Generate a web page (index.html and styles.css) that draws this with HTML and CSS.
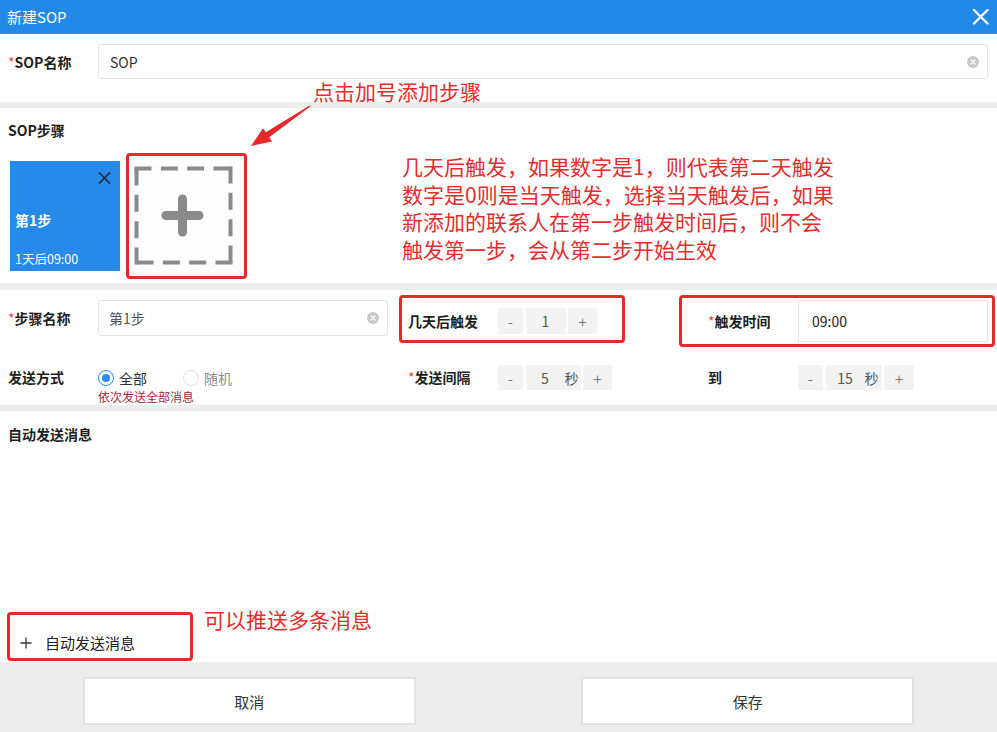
FILE: index.html
```html
<!DOCTYPE html>
<html lang="zh-CN">
<head>
<meta charset="utf-8">
<title>新建SOP</title>
<link rel="stylesheet" href="styles.css">
</head>
<body>
<div class="page">
  <header class="topbar">
    <span class="title">新建SOP</span>
    <svg class="close" viewBox="0 0 16 16" width="17" height="16"><path d="M1.5 1 L15 14.5 M15 1 L1.5 14.5" stroke="#fff" stroke-width="2.3" stroke-linecap="round"/></svg>
  </header>

  <section class="sec sec-name">
    <div class="lbl name-lbl"><span class="req">*</span>SOP名称</div>
    <div class="input grow"><span>SOP</span>
      <svg class="clear" viewBox="0 0 12 12" width="12" height="12"><circle cx="6" cy="6" r="6" fill="#c8c8c8"/><path d="M4 4 L8 8 M8 4 L4 8" stroke="#fff" stroke-width="1.4" stroke-linecap="round"/></svg>
    </div>
  </section>

  <section class="sec sec-steps">
    <div class="lbl">SOP步骤</div>
    <div class="steps">
      <div class="step-card">
        <div class="step-top">
          <svg viewBox="0 0 13 12" width="13" height="12"><path d="M1 0.5 L12 11.5 M12 0.5 L1 11.5" stroke="#1d2a38" stroke-width="1.6"/></svg>
        </div>
        <div class="step-title">第1步</div>
        <div class="step-sub">1天后09:00</div>
      </div>
      <div class="step-add">
        <svg viewBox="0 0 110 110" width="110" height="110">
          <g stroke="#8a8a8a" stroke-width="4" stroke-dasharray="13 13.33" stroke-linecap="square" fill="none">
            <line x1="8.5" y1="8.5" x2="102.5" y2="8.5"/>
            <line x1="102.5" y1="8.5" x2="102.5" y2="102.5"/>
            <line x1="102.5" y1="102.5" x2="8.5" y2="102.5"/>
            <line x1="8.5" y1="102.5" x2="8.5" y2="8.5"/>
          </g>
          <g stroke="#8a8a8a" stroke-width="9" stroke-linecap="round">
            <line x1="38" y1="55.5" x2="71" y2="55.5"/>
            <line x1="54.5" y1="39" x2="54.5" y2="72"/>
          </g>
        </svg>
      </div>
    </div>
  </section>

  <section class="sec sec-form">
    <div class="cell c1 top">
      <div class="lbl"><span class="req">*</span>步骤名称</div>
      <div class="input step-input grow"><span>第1步</span>
        <svg class="clear" viewBox="0 0 12 12" width="12" height="12"><circle cx="6" cy="6" r="6" fill="#c8c8c8"/><path d="M4 4 L8 8 M8 4 L4 8" stroke="#fff" stroke-width="1.4" stroke-linecap="round"/></svg>
      </div>
    </div>
    <div class="cell c2">
      <div class="lbl">几天后触发</div>
      <div class="spin">
        <span class="sb sb-minus">-</span>
        <span class="sb sb-val">1</span>
        <span class="sb sb-plus">+</span>
      </div>
    </div>
    <div class="cell c3">
      <div class="lbl"><span class="req">*</span>触发时间</div>
      <div class="input time-input grow"><span>09:00</span></div>
    </div>

    <div class="cell c1 r2">
      <div class="lbl">发送方式</div>
      <div class="radio-col">
        <div class="radios">
          <span class="radio checked"></span><span class="rtext">全部</span>
          <span class="radio"></span><span class="rtext off">随机</span>
        </div>
        <div class="hint">依次发送全部消息</div>
      </div>
    </div>
    <div class="cell c2 r2">
      <div class="lbl"><span class="req">*</span>发送间隔</div>
      <div class="spin">
        <span class="sb sb-minus">-</span>
        <span class="sb sb-val unit"><span class="num">5</span><span class="u">秒</span></span>
        <span class="sb sb-plus">+</span>
      </div>
    </div>
    <div class="cell c3 r2">
      <div class="lbl">到</div>
      <div class="spin">
        <span class="sb sb-minus">-</span>
        <span class="sb sb-val unit wide"><span class="num">15</span><span class="u">秒</span></span>
        <span class="sb sb-plus wide">+</span>
      </div>
    </div>
  </section>

  <section class="sec sec-msg">
    <div class="lbl">自动发送消息</div>
    <div class="add-msg">
      <svg viewBox="0 0 12 12" width="12" height="12"><path d="M6 0.5 V11.5 M0.5 6 H11.5" stroke="#333" stroke-width="1.3"/></svg>
      <span>自动发送消息</span>
    </div>
  </section>

  <footer class="footer">
    <div class="half"><button class="btn">取消</button></div>
    <div class="half"><button class="btn">保存</button></div>
  </footer>

  <!-- annotations overlay -->
  <div class="anno-box b1"></div>
  <div class="anno-box b2"></div>
  <div class="anno-box b3"></div>
  <div class="anno-box b4"></div>
  <div class="anno-text t1">点击加号添加步骤</div>
  <div class="anno-text t2">几天后触发，如果数字是1，则代表第二天触发<br>数字是0则是当天触发，选择当天触发后，如果<br>新添加的联系人在第一步触发时间后，则不会<br>触发第一步，会从第二步开始生效</div>
  <div class="anno-text t3">可以推送多条消息</div>
  <svg class="arrow" viewBox="0 0 70 52" width="70" height="52">
    <polygon points="6,46 27,41.4 24.2,37.3 65.3,6.6 64.5,5.4 20.8,32.3 18,28.2" fill="#e8292b"/>
  </svg>
</div>
</body>
</html>
```

FILE: styles.css
```css
* { box-sizing: border-box; }
html, body { margin: 0; padding: 0; }
body {
  width: 997px;
  height: 732px;
  overflow: hidden;
  background: #ededed;
  font-family: "Noto Sans CJK SC", "Noto Sans", sans-serif;
  font-size: 14px;
  color: #333;
}
.page { position: relative; width: 997px; height: 732px; }

.topbar {
  height: 34px;
  background: #2389e8;
  display: flex;
  align-items: center;
  justify-content: space-between;
  padding: 0 8px 0 7px;
  color: #fff;
}
.title { font-size: 15px; line-height: 20px; }

.sec { background: #fff; }
.lbl { font-weight: 700; font-size: 14px; line-height: 20px; color: #1e1e1e; white-space: nowrap; }
.req { color: #e0464a; font-weight: 400; }
.grow { flex: 1; }

.input {
  height: 35px;
  border: 1px solid #e4e4e4;
  border-radius: 3px;
  display: flex;
  align-items: center;
  justify-content: space-between;
  padding: 0 8px 0 11px;
  font-size: 14px;
  color: #333;
}

.sec-name {
  height: 68px;
  margin-bottom: 6px;
  display: flex;
  align-items: flex-start;
  padding: 10px 9px 0 8px;
}
.name-lbl { width: 90px; height: 35px; display: flex; align-items: center; }

.sec-steps {
  height: 175px;
  margin-bottom: 7px;
  padding: 12px 0 0 8px;
}
.steps { display: flex; gap: 10px; margin-top: 21px; padding-left: 2px; }
.step-card {
  width: 110px;
  height: 110px;
  background: #2789e8;
  color: #fff;
  padding: 11px 9px 0 5px;
  display: flex;
  flex-direction: column;
}
.step-top { display: flex; justify-content: flex-end; height: 12px; }
.step-title { font-weight: 700; font-size: 14px; line-height: 20px; margin-top: 26px; }
.step-sub { font-size: 12.5px; line-height: 16px; margin-top: 21px; }
.step-add { width: 110px; height: 110px; background: #fdfdfd; }
.step-add svg { display: block; margin-left: -2px; margin-top: -1px; }

.sec-form {
  height: 115px;
  margin-bottom: 6px;
  padding-top: 10px;
  display: grid;
  grid-template-columns: 398px 300px 1fr;
  grid-template-rows: 42px 25px;
  row-gap: 23px;
}
.cell { display: flex; align-items: center; }
.cell .lbl { width: 90px; flex: none; }
.c1 { padding-left: 8px; padding-right: 10px; }
.c2 { padding-left: 10px; }
.c3 { padding-left: 10px; padding-right: 9px; }
.cell.top { align-self: start; }
.step-input { height: 36px; padding-left: 10px; color: #555; }
.time-input { height: 42px; border-radius: 0; padding-left: 13px; color: #222; }
.cell.r2 { align-items: flex-start; }
.cell.r2 .lbl { line-height: 25px; }

.spin { display: flex; gap: 2.5px; height: 26px; }
.r2 .spin { height: 25px; }
.sb {
  background: #f3f3f3;
  display: flex;
  align-items: center;
  justify-content: center;
  color: #666;
  font-size: 14px;
  line-height: 20px;
}
.sb-minus, .sb-plus { font-size: 16px; font-weight: 300; }
.sb-minus { width: 25px; }
.sb-plus { width: 29px; }
.sb-val { width: 40px; color: #555; }
.sb-val.unit { width: 55px; justify-content: flex-start; }
.sb-val.unit.wide { width: 56px; }
.sb-plus.wide { width: 30px; }
.num { width: 39px; text-align: center; }
.u { width: 14px; }

.radio-col { display: flex; flex-direction: column; }
.radios { display: flex; align-items: center; height: 25px; }
.radio {
  width: 16px;
  height: 16px;
  border-radius: 50%;
  border: 1px solid #dcdee2;
  background: #fff;
  position: relative;
}
.radio.checked { border-color: #2d8cf0; }
.radio.checked::after {
  content: "";
  position: absolute;
  left: 3px; top: 3px;
  width: 8px; height: 8px;
  border-radius: 50%;
  background: #2d8cf0;
}
.rtext { margin-left: 5px; margin-right: 36px; color: #333; line-height: 20px; }
.rtext.off { color: #8e8e8e; }
.hint { font-size: 12px; line-height: 14px; color: #9c2a40; }

.sec-msg {
  height: 251px;
  padding: 13px 8px 9px;
  display: flex;
  flex-direction: column;
  justify-content: space-between;
}
.add-msg { display: flex; align-items: center; padding-left: 12px; font-size: 15px; line-height: 20px; color: #222; }
.add-msg span { margin-left: 13px; }

.footer { height: 70px; display: flex; background: #ededed; }
.half { flex: 1; display: flex; justify-content: center; padding-top: 15px; }
.btn {
  width: 333px;
  height: 48px;
  background: #fff;
  border: 2px solid #e3e3e3;
  font-family: "Noto Sans CJK SC", "Noto Sans", sans-serif;
  font-size: 15px;
  color: #333;
  padding: 0;
}

.anno-box { position: absolute; border: 3px solid #e52a2b; border-radius: 4px; }
.b1 { left: 126px; top: 153px; width: 121px; height: 126px; }
.b2 { left: 399px; top: 295px; width: 226px; height: 48px; }
.b3 { left: 679px; top: 295px; width: 316px; height: 52px; }
.b4 { left: 7px; top: 612px; width: 186px; height: 49px; }
.anno-text { position: absolute; color: #e52d2d; font-size: 21px; line-height: 28px; white-space: nowrap; }
.t1 { left: 313px; top: 77px; }
.t2 { left: 402px; top: 153px; line-height: 27.7px; }
.t3 { left: 204px; top: 605px; }
.arrow { position: absolute; left: 245px; top: 100px; }
```
